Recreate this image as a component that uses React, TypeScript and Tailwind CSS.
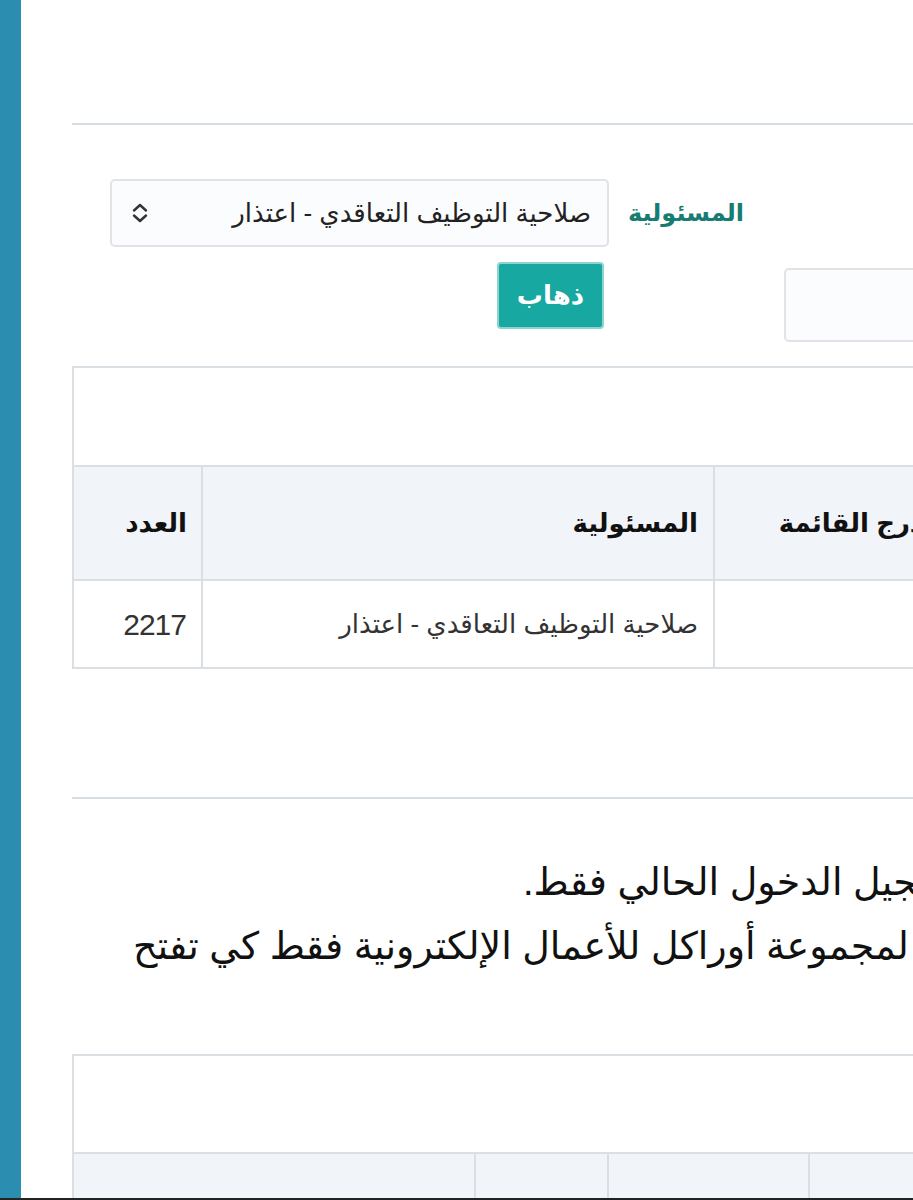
import React from "react";

const Chevrons = () => (
  <svg width="16" height="22" viewBox="0 0 16 22" fill="none" stroke="#333" strokeWidth="2.4" strokeLinecap="round" strokeLinejoin="round">
    <path d="M2 8.5 L8 3 L14 8.5" />
    <path d="M2 13.5 L8 19 L14 13.5" />
  </svg>
);

const App = () => {
  return (
    <div className="h-[1200px] flex flex-col bg-white font-['Liberation_Sans','DejaVu_Sans',sans-serif] overflow-hidden">
      <div className="flex flex-1 min-h-0">
        {/* side bar */}
        <div className="w-[21px] shrink-0 bg-[#2b8db0]" />

        <div className="flex-1 overflow-hidden pl-[51px]">
          <div className="w-[1100px]">
            <div className="h-[123px]" />
            <div className="h-[2px] bg-[#d6dee3]" />

            {/* filter form */}
            <div className="flex items-center mt-[54px]">
              <div className="ml-[38px] w-[499px] h-[68px] flex items-center justify-between pl-5 pr-4 border-2 border-[#e1e3e6] rounded-[5px] bg-[#fbfcfd]">
                <Chevrons />
                <span dir="rtl" className="text-[26px] text-[#222]">صلاحية التوظيف التعاقدي - اعتذار</span>
              </div>
              <label dir="rtl" className="ml-[19px] text-[24px] font-bold text-[#177c72]">المسئولية</label>
            </div>

            <div className="flex items-start">
              <button className="ml-[425px] mt-[15px] w-[107px] h-[67px] rounded-[4px] bg-[#16a8a1] border-2 border-[#8fd3cf] text-white text-[26px] font-bold">
                <span dir="rtl">ذهاب</span>
              </button>
              <div className="ml-[180px] mt-[21px] w-[300px] h-[74px] border-2 border-[#e1e3e6] rounded-[5px] bg-[#fbfcfd]" />
            </div>

            {/* results table */}
            <div className="mt-[24px] w-[1000px] border-2 border-[#dadfe4] border-b-0">
              <div className="h-[97px]" />
              <table className="border-collapse w-full table-fixed">
                <colgroup>
                  <col className="w-[128px]" />
                  <col className="w-[512px]" />
                  <col className="w-[243px]" />
                  <col />
                </colgroup>
                <thead>
                  <tr className="bg-[#f1f4f8] h-[114px]">
                    <th dir="rtl" className="border-2 border-[#dadfe4] border-l-0 text-right pr-[14px] text-[26px] font-bold text-[#111]">العدد</th>
                    <th dir="rtl" className="border-2 border-[#dadfe4] text-right pr-[15px] text-[26px] font-bold text-[#111]">المسئولية</th>
                    <th dir="rtl" className="border-2 border-[#dadfe4] text-right pr-[15px] text-[26px] font-bold text-[#111] whitespace-nowrap">مدرج القائمة</th>
                    <th className="border-2 border-[#dadfe4]" />
                  </tr>
                </thead>
                <tbody>
                  <tr className="h-[88px]">
                    <td className="border-2 border-[#dadfe4] border-l-0 text-right pr-[15px] text-[30px] tracking-[-1px] text-[#333]">2217</td>
                    <td dir="rtl" className="border-2 border-[#dadfe4] text-right pr-[15px] text-[26px] text-[#333]">صلاحية التوظيف التعاقدي - اعتذار</td>
                    <td className="border-2 border-[#dadfe4]" />
                    <td className="border-2 border-[#dadfe4]" />
                  </tr>
                </tbody>
              </table>
            </div>

            <div className="mt-[128px] h-[2px] bg-[#d6dee3]" />

            {/* notice text */}
            <div className="mt-[51px] flex flex-col text-[38px] leading-[64px] text-[#111]">
              <div className="flex">
                <span dir="rtl" className="ml-[451px] whitespace-nowrap">تسجيل الدخول الحالي فقط.</span>
              </div>
              <div className="flex">
                <span dir="rtl" className="ml-[61px] whitespace-nowrap">التابعة لمجموعة أوراكل للأعمال الإلكترونية فقط كي تفتح</span>
              </div>
            </div>

            {/* second table */}
            <div className="mt-[76px] w-[1000px] border-2 border-[#dadfe4] border-b-0">
              <div className="h-[96px]" />
              <div className="grid grid-cols-[402px_133px_201px_1fr] h-[60px] bg-[#f1f4f8] border-t-2 border-[#dadfe4]">
                <div className="border-r-2 border-[#dadfe4]" />
                <div className="border-r-2 border-[#dadfe4]" />
                <div className="border-r-2 border-[#dadfe4]" />
                <div />
              </div>
            </div>
          </div>
        </div>
      </div>
      <div className="h-[2px] bg-[#222]" />
    </div>
  );
};

export default App;
